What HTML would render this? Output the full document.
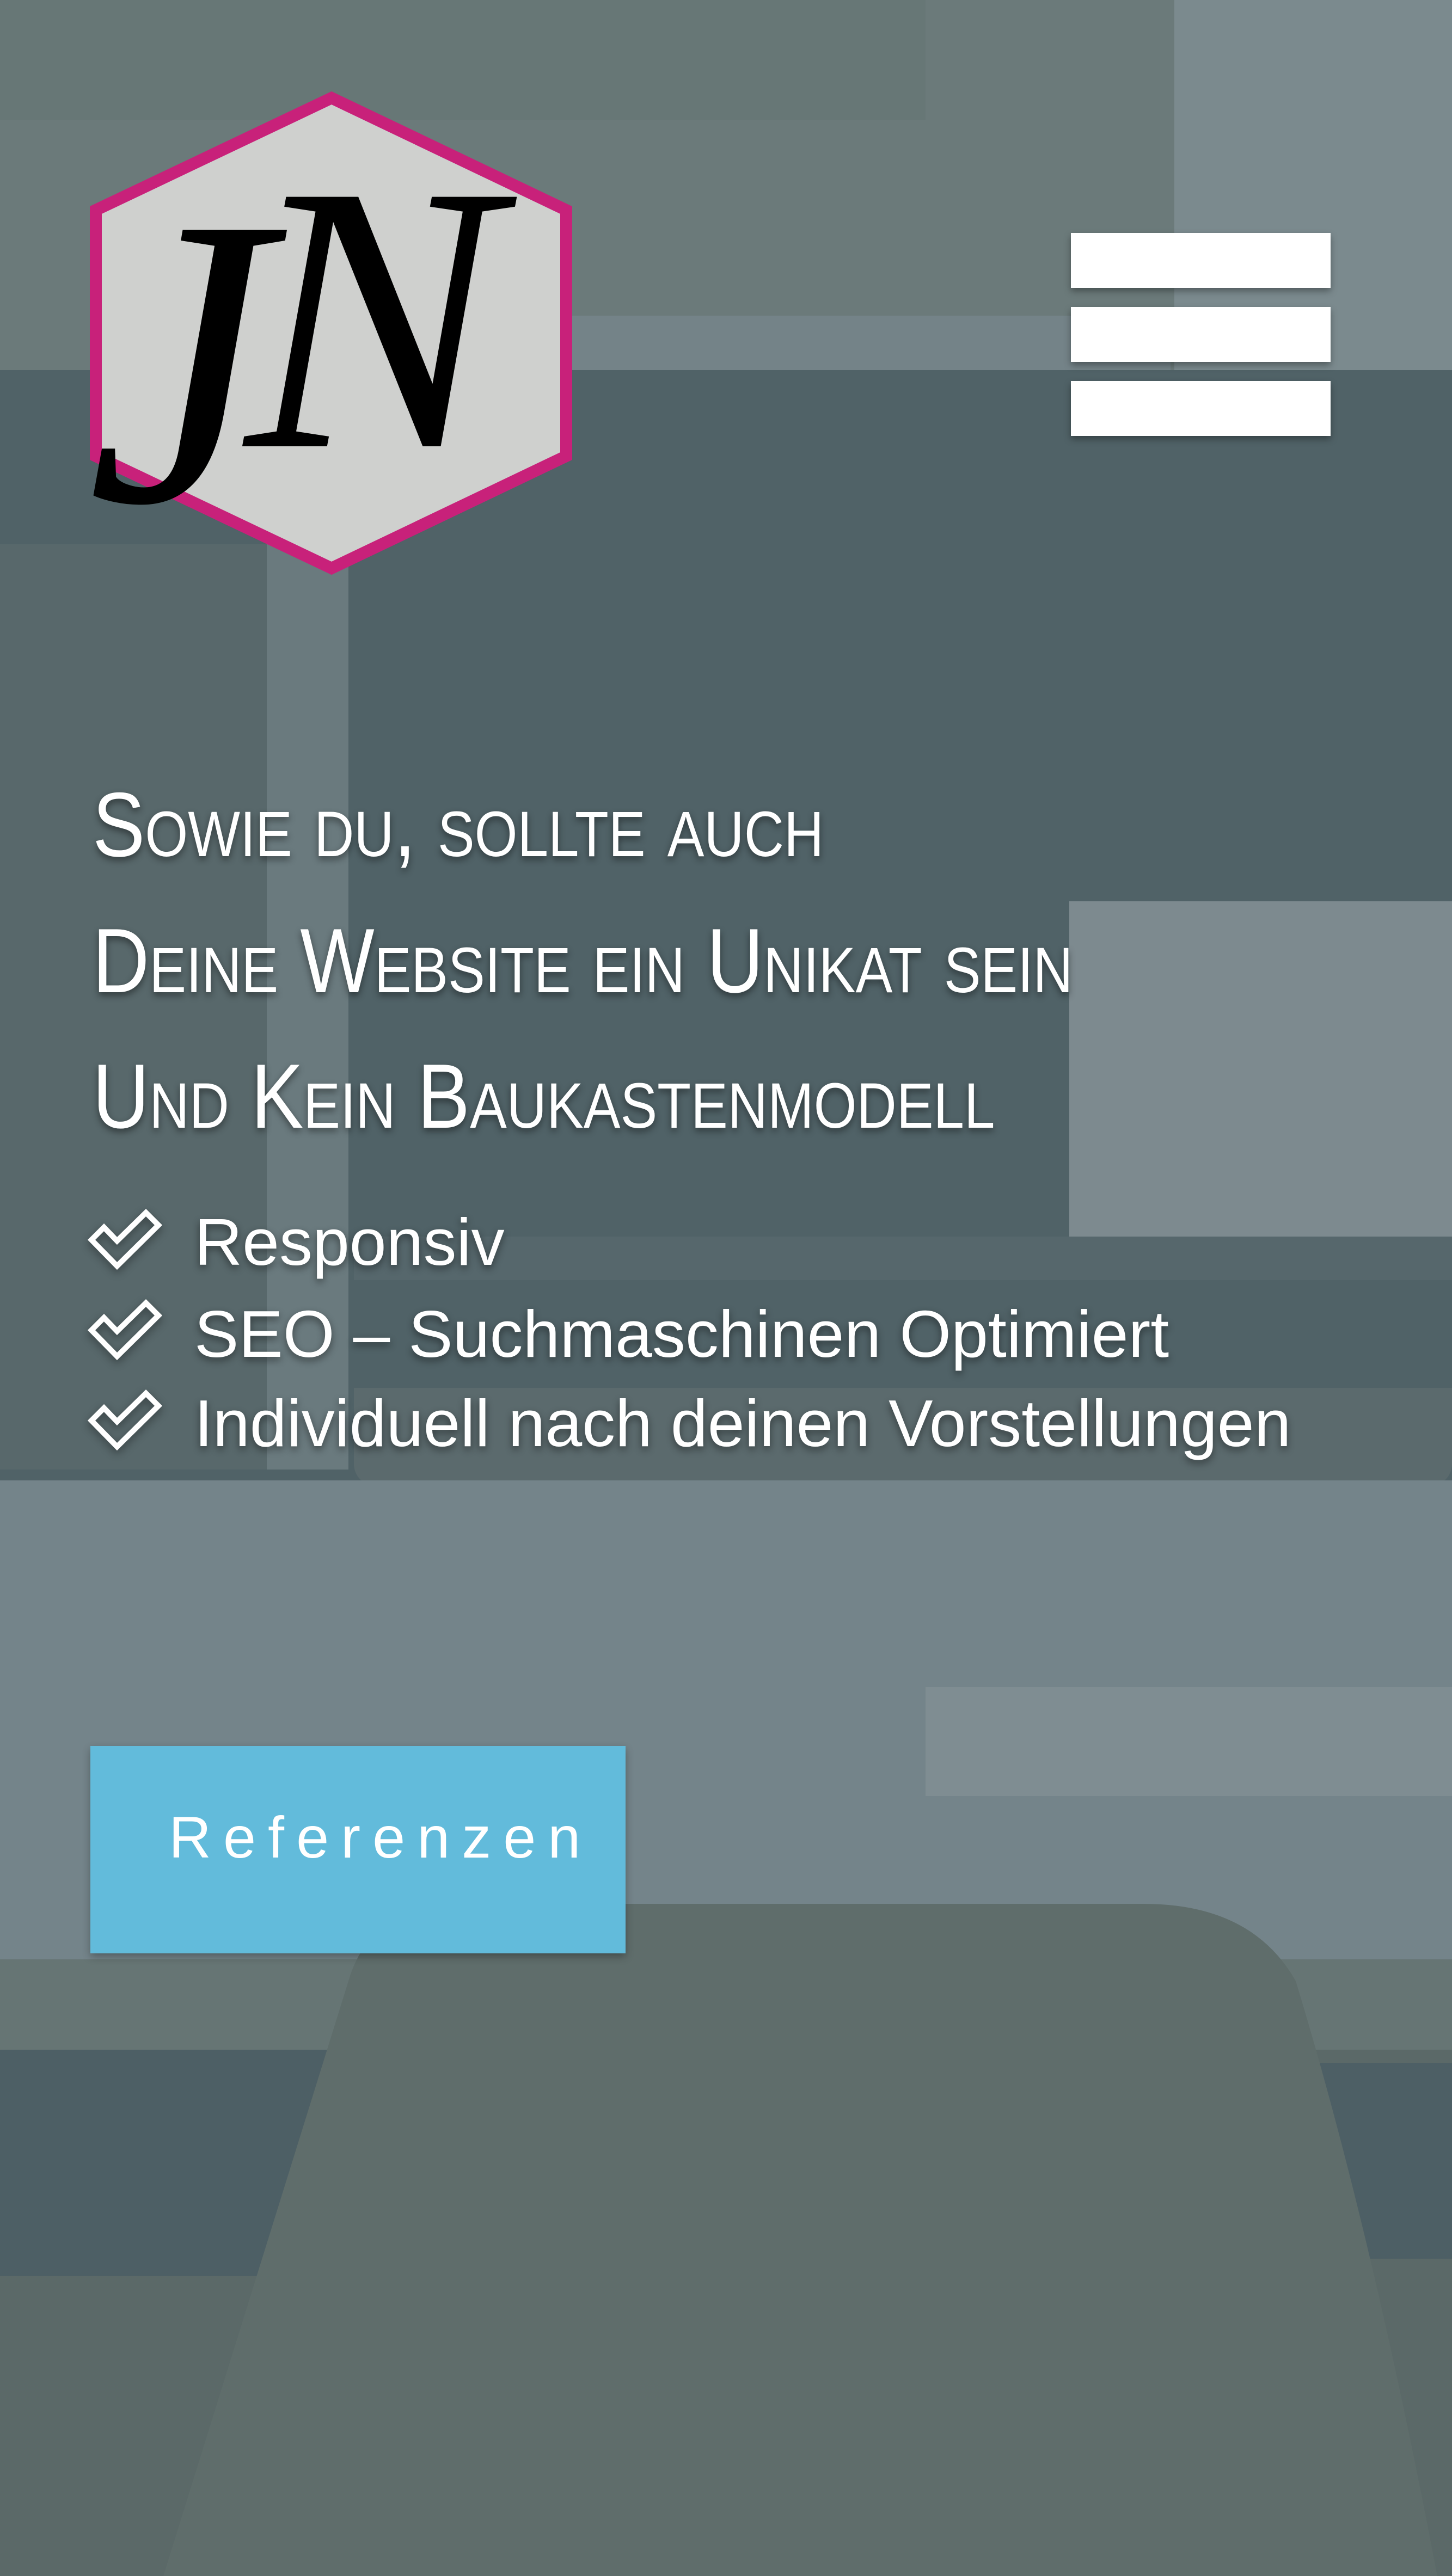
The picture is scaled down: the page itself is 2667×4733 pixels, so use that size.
<!DOCTYPE html>
<html><head><meta charset="utf-8"><style>
html,body{margin:0;padding:0;}
body{width:2667px;height:4733px;position:relative;overflow:hidden;background:#5b6968;font-family:"Liberation Sans",sans-serif;}
.r{position:absolute;}
.h{position:absolute;left:170px;color:#fff;font-size:168px;font-variant:small-caps;white-space:nowrap;text-shadow:0 6px 14px rgba(0,0,0,.45);line-height:1;transform:scaleX(0.86);transform-origin:0 0;}
.li{position:absolute;left:357px;color:#fff;font-size:122px;white-space:nowrap;text-shadow:0 6px 14px rgba(0,0,0,.45);line-height:1;}
.bar{position:absolute;left:1967px;width:477px;height:101px;background:#fff;box-shadow:0 6px 12px rgba(0,0,0,.35);}
</style></head><body>
<div class="r" style="left:0;top:0;width:2667px;height:700px;background:#6b7a7a"></div>
<div class="r" style="left:0;top:0;width:1700px;height:220px;background:#677776"></div>
<div class="r" style="left:2157px;top:0;width:510px;height:700px;background:#7b8a8e"></div>
<div class="r" style="left:1050px;top:580px;width:1100px;height:110px;background:#748388"></div>
<div class="r" style="left:0;top:680px;width:2667px;height:2050px;background:#506267"></div>
<div class="r" style="left:0;top:1000px;width:520px;height:1700px;background:#58686b"></div>
<div class="r" style="left:490px;top:1000px;width:150px;height:1700px;background:#6a7a7e"></div>
<div class="r" style="left:1964px;top:1656px;width:703px;height:616px;background:#7d8a8f"></div>
<div class="r" style="left:650px;top:2272px;width:2017px;height:80px;background:#56676c"></div>
<div class="r" style="left:650px;top:2550px;width:2017px;height:180px;background:#5b6a6d;border-radius:0 0 40px 40px"></div>
<div class="r" style="left:0;top:2720px;width:2667px;height:880px;background:#74848a"></div>
<div class="r" style="left:1700px;top:3100px;width:967px;height:200px;background:#7f8d92"></div>
<div class="r" style="left:0;top:3600px;width:2667px;height:1133px;background:#5b6968"></div>
<div class="r" style="left:0;top:3600px;width:2667px;height:166px;background:#667574"></div>
<div class="r" style="left:0;top:3766px;width:600px;height:416px;background:#4d5f65"></div>
<div class="r" style="left:2400px;top:3790px;width:267px;height:360px;background:#4d5f65"></div>
<svg class="r" style="left:0;top:0" width="2667" height="4733" viewBox="0 0 2667 4733">
<path d="M300,4733 L640,3640 Q680,3498 860,3498 L2100,3498 Q2300,3498 2380,3640 Q2520,4100 2640,4733 Z" fill="#5f6d6b"/>
</svg>

<svg class="r" style="left:0;top:0" width="1200" height="1200" viewBox="0 0 1200 1200">
<polygon points="609,180 1040,386 1040,838 609,1044 176,838 176,386" fill="#cfd0ce" stroke="#c8217a" stroke-width="22"/>
<text x="160" y="920" font-family="Liberation Serif,serif" font-style="italic" font-size="760" fill="#000">J</text>
<text x="450" y="820" font-family="Liberation Serif,serif" font-style="italic" font-size="700" fill="#000">N</text>
</svg>

<div class="bar" style="top:428px"></div>
<div class="bar" style="top:564px"></div>
<div class="bar" style="top:700px"></div>

<div class="h" style="top:1431px">Sowie du, sollte auch</div>
<div class="h" style="top:1681px">Deine Website ein Unikat sein</div>
<div class="h" style="top:1930px">Und Kein Baukastenmodell</div>

<svg class="r" style="left:0;top:0;filter:drop-shadow(0 6px 8px rgba(0,0,0,.4))" width="400" height="2800" viewBox="0 0 400 2800">
<g fill="none" stroke="#fff" stroke-width="10" stroke-linejoin="miter">
<polygon points="168,2278 191,2255 215,2280 268,2228 291,2251 215,2326"/>
<polygon points="168,2444 191,2421 215,2446 268,2394 291,2417 215,2492"/>
<polygon points="168,2610 191,2587 215,2612 268,2560 291,2583 215,2658"/>
</g></svg>
<div class="li" style="top:2221px">Responsiv</div>
<div class="li" style="top:2390px">SEO – Suchmaschinen Optimiert</div>
<div class="li" style="top:2554px">Individuell nach deinen Vorstellungen</div>

<div class="r" style="left:166px;top:3208px;width:983px;height:381px;background:#62bbdb;box-shadow:0 6px 14px rgba(0,0,0,.3)"></div>
<div class="r" style="left:310px;top:3322px;color:#fff;font-size:108px;letter-spacing:22px;line-height:1;white-space:nowrap">Referenzen</div>
</body></html>
